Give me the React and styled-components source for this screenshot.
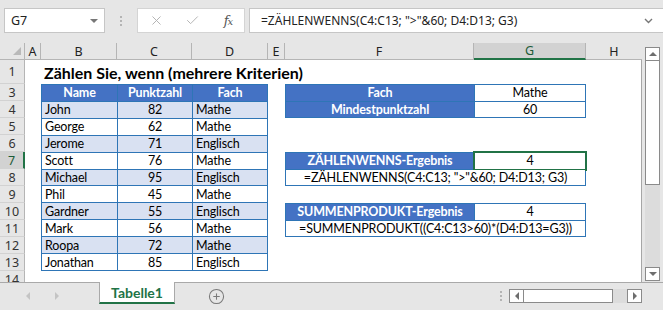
import React from 'react';
import styled, { createGlobalStyle, css } from 'styled-components';
import { X, Check, CirclePlus } from 'lucide-react';

const ui = `"Noto Sans", "Open Sans", "DejaVu Sans", sans-serif`;
const cellFont = `Lato, "Liberation Sans", sans-serif`;
const green = '#217346';
const blue = '#4472c4';
const line = '#2e75b6';
const band = '#d9e1f2';

const Global = createGlobalStyle`
  html, body { margin: 0; padding: 0; background: #e6e6e6; }
  body { width: 663px; height: 310px; overflow: hidden; }
  * { box-sizing: border-box; }
`;

const Window = styled.div`
  width: 663px;
  height: 310px;
  display: flex;
  flex-direction: column;
  background: #e6e6e6;
  overflow: hidden;
`;

/* ---------- formula bar ---------- */
const FormulaRow = styled.div`
  height: 43px;
  flex-shrink: 0;
  display: flex;
  align-items: flex-start;
  padding: 8px 0 0 4px;
`;

const NameBox = styled.div`
  width: 101px;
  height: 25px;
  background: #fff;
  border: 1px solid #c6c6c6;
  display: flex;
  align-items: center;
  justify-content: space-between;
  padding: 0 6px 0 6px;
  font: 12.5px ${ui};
  color: #222;
`;

const DownTri = styled.span`
  width: 0;
  height: 0;
  border-left: 4px solid transparent;
  border-right: 4px solid transparent;
  border-top: 4px solid ${p => p.$color || '#777'};
`;

const Grip = styled.div`
  width: 32px;
  height: 25px;
  display: flex;
  flex-direction: column;
  align-items: center;
  justify-content: center;
  gap: 2px;
`;

const GripDot = styled.span`
  width: 2px;
  height: 2px;
  background: #b4b4b4;
`;

const FxBox = styled.div`
  width: 108px;
  height: 25px;
  background: #fff;
  border: 1px solid #d4d4d4;
  display: grid;
  grid-template-columns: repeat(3, 36px);
  align-items: center;
  justify-items: center;
`;

const Fx = styled.span`
  font: italic 13px "DejaVu Serif", "Liberation Serif", serif;
  color: #555;
  letter-spacing: -1px;
  & > span { font-size: 10px; }
`;

const FormulaInput = styled.div`
  flex: 1;
  margin-left: 4px;
  height: 25px;
  background: #fff;
  border: 1px solid #c6c6c6;
  border-right: none;
  display: flex;
  align-items: center;
  justify-content: space-between;
  padding: 0 10px 0 11px;
  font: 12px ${ui};
  color: #222;
  white-space: nowrap;
`;

const Chevron = styled.svg`
  width: 9px;
  height: 6px;
`;

/* ---------- sheet ---------- */
const Main = styled.div`
  display: flex;
  height: 239px;
  flex-shrink: 0;
`;

const Sheet = styled.div`
  width: 642px;
  height: 239px;
  overflow: hidden;
  display: grid;
  grid-template-columns: 25px 16px 76px 75px 76px 17px 189px 112px 56px;
  grid-template-rows: 17px 24px repeat(12, 17px);
`;

const CellArea = styled.div`
  grid-column: 2 / -1;
  grid-row: 2 / -1;
  background: #fff;
  border-right: 1px solid #a6a6a6;
`;

const Corner = styled.div`
  grid-column: 1;
  grid-row: 1;
  border-right: 1px solid #b5b5b5;
  border-bottom: 1px solid #b5b5b5;
  display: flex;
  align-items: flex-end;
  justify-content: flex-end;
  padding: 0 3px 4px 0;
  &::after {
    content: '';
    width: 0;
    height: 0;
    border-left: 8px solid transparent;
    border-bottom: 8px solid #b9b9b9;
  }
`;

const ColHead = styled.div`
  grid-row: 1;
  grid-column: ${p => p.$col};
  display: flex;
  align-items: center;
  justify-content: center;
  font: 12.5px ${ui};
  color: #222;
  border-right: 1px solid #b5b5b5;
  border-bottom: 1px solid #b5b5b5;
  ${p => p.$active && css`
    background: #d2d2d2;
    border-bottom: 2px solid ${green};
    color: #1d5b38;
  `}
  ${p => p.$last && css`border-right: none;`}
`;

const RowHead = styled.div`
  grid-column: 1;
  grid-row: ${p => p.$row};
  display: flex;
  align-items: center;
  justify-content: center;
  font: 12.5px ${ui};
  color: #333;
  border-right: 1px solid #b5b5b5;
  border-bottom: 1px solid #d2d2d2;
  ${p => p.$active && css`
    background: #d2d2d2;
    border-right: 2px solid ${green};
    color: #1d5b38;
  `}
`;

const Title = styled.div`
  grid-column: 3 / 10;
  grid-row: 2;
  display: flex;
  align-items: flex-end;
  padding: 0 0 2px 3px;
  font: bold 16px ${cellFont};
  color: #000;
  white-space: nowrap;
`;

const Table = styled.div`
  grid-column: ${p => p.$col};
  grid-row: ${p => p.$row};
  display: grid;
  grid-template-columns: ${p => p.$cols};
  grid-auto-rows: 1fr;
  gap: 1px;
  padding: 1px;
  background: ${line};
`;

const Cell = styled.div`
  display: flex;
  align-items: center;
  justify-content: ${p => (p.$align === 'center' ? 'center' : 'flex-start')};
  padding: 0 3px;
  font: ${p => (p.$head ? 'bold ' : '')}12.5px ${cellFont};
  letter-spacing: -0.15px;
  color: ${p => (p.$head ? '#fff' : '#000')};
  background: ${p => (p.$head ? blue : p.$band ? band : '#fff')};
  white-space: nowrap;
  overflow: hidden;
  grid-column: ${p => p.$span || 'auto'};
  ${p => p.$selected && css`
    outline: 2px solid ${green};
    outline-offset: 0px;
  `}
`;

/* ---------- scrollbars ---------- */
const VScroll = styled.div`
  width: 15px;
  margin: 4px 0 1px 3px;
  display: flex;
  flex-direction: column;
  background: #dcdcdc;
`;

const SBtn = styled.div`
  width: 15px;
  height: 14px;
  flex-shrink: 0;
  background: #fff;
  border: 1px solid #8a8a8a;
  display: flex;
  align-items: center;
  justify-content: center;
`;

const Tri = styled.span`
  width: 0;
  height: 0;
  ${p => p.$dir === 'up' && css`
    border-left: 4px solid transparent;
    border-right: 4px solid transparent;
    border-bottom: 4px solid #6e6e6e;
  `}
  ${p => p.$dir === 'down' && css`
    border-left: 4px solid transparent;
    border-right: 4px solid transparent;
    border-top: 4px solid #6e6e6e;
  `}
  ${p => p.$dir === 'left' && css`
    border-top: 4px solid transparent;
    border-bottom: 4px solid transparent;
    border-right: 4px solid ${p.$color || '#6e6e6e'};
  `}
  ${p => p.$dir === 'right' && css`
    border-top: 4px solid transparent;
    border-bottom: 4px solid transparent;
    border-left: 4px solid ${p.$color || '#6e6e6e'};
  `}
`;

const VThumb = styled.div`
  height: 124px;
  flex-shrink: 0;
  background: #fff;
  border: 1px solid #8a8a8a;
  border-top: none;
`;

const Spacer = styled.div`
  flex: 1;
`;

/* ---------- tab bar ---------- */
const TabBar = styled.div`
  flex: 1;
  display: flex;
  align-items: flex-start;
  border-top: 1px solid #a9a9a9;
`;

const Nav = styled.div`
  width: 99px;
  height: 26px;
  display: flex;
  align-items: center;
  gap: 25px;
  padding-left: 26px;
`;

const Tab = styled.div`
  width: 76px;
  height: 22px;
  margin-top: -1px;
  background: #fff;
  border-left: 1px solid #a9a9a9;
  border-right: 1px solid #a9a9a9;
  border-bottom: 2px solid ${green};
  display: flex;
  align-items: center;
  justify-content: center;
  font: bold 14px ${cellFont};
  color: ${green};
`;

const AddSheet = styled.div`
  margin-left: 33px;
  height: 26px;
  display: flex;
  align-items: center;
`;

const HGrip = styled.div`
  height: 26px;
  width: 16px;
  display: flex;
  flex-direction: column;
  align-items: center;
  justify-content: center;
  gap: 2px;
`;

const HScroll = styled.div`
  width: 133px;
  height: 14px;
  margin: 6px 21px 0 0;
  display: flex;
  background: #dcdcdc;
`;

const HBtn = styled(SBtn)`
  width: 15px;
  height: 14px;
`;

const HThumb = styled.div`
  width: 89px;
  background: #fff;
  border: 1px solid #8a8a8a;
  border-left: none;
`;

const names = [
  ['John', '82', 'Mathe'],
  ['George', '62', 'Mathe'],
  ['Jerome', '71', 'Englisch'],
  ['Scott', '76', 'Mathe'],
  ['Michael', '95', 'Englisch'],
  ['Phil', '45', 'Mathe'],
  ['Gardner', '55', 'Englisch'],
  ['Mark', '56', 'Mathe'],
  ['Roopa', '72', 'Mathe'],
  ['Jonathan', '85', 'Englisch'],
];

const cols = ['A', 'B', 'C', 'D', 'E', 'F', 'G', 'H'];
const rows = [
  [1, 2], [3, 3], [4, 4], [5, 5], [6, 6], [7, 7], [8, 8], [9, 9],
  [10, 10], [11, 11], [12, 12], [13, 13], [14, 14],
];

export default function App() {
  return (
    <Window>
      <Global />
      <FormulaRow>
        <NameBox>
          <span>G7</span>
          <DownTri />
        </NameBox>
        <Grip>
          <GripDot /><GripDot /><GripDot />
        </Grip>
        <FxBox>
          <X size={15} color="#b0b0b0" strokeWidth={1.5} />
          <Check size={15} color="#b0b0b0" strokeWidth={1.5} />
          <Fx>f<span>x</span></Fx>
        </FxBox>
        <FormulaInput>
          <span>=ZÄHLENWENNS(C4:C13; "&gt;"&amp;60; D4:D13; G3)</span>
          <Chevron viewBox="0 0 9 6">
            <path d="M1 1 L4.5 4.5 L8 1" fill="none" stroke="#777" strokeWidth="1.4" />
          </Chevron>
        </FormulaInput>
      </FormulaRow>

      <Main>
        <Sheet>
          <CellArea />
          <Corner />
          {cols.map((c, i) => (
            <ColHead key={c} $col={i + 2} $active={c === 'G'} $last={c === 'H'}>{c}</ColHead>
          ))}
          {rows.map(([label, r]) => (
            <RowHead key={label} $row={r} $active={label === 7}>{label}</RowHead>
          ))}
          <Title>Zählen Sie, wenn (mehrere Kriterien)</Title>

          <Table $col="3 / 6" $row="3 / 14" $cols="75px 74px 1fr">
            <Cell $head $align="center">Name</Cell>
            <Cell $head $align="center">Punktzahl</Cell>
            <Cell $head $align="center">Fach</Cell>
            {names.map(([n, p, f], i) => (
              <React.Fragment key={n}>
                <Cell $band={i % 2 === 0}>{n}</Cell>
                <Cell $band={i % 2 === 0} $align="center">{p}</Cell>
                <Cell $band={i % 2 === 0}>{f}</Cell>
              </React.Fragment>
            ))}
          </Table>

          <Table $col="7 / 9" $row="3 / 5" $cols="188px 1fr">
            <Cell $head $align="center">Fach</Cell>
            <Cell $align="center">Mathe</Cell>
            <Cell $head $align="center">Mindestpunktzahl</Cell>
            <Cell $align="center">60</Cell>
          </Table>

          <Table $col="7 / 9" $row="7 / 9" $cols="188px 1fr">
            <Cell $head $align="center">ZÄHLENWENNS-Ergebnis</Cell>
            <Cell $align="center" $selected>4</Cell>
            <Cell $align="center" $span="1 / -1">=ZÄHLENWENNS(C4:C13; "&gt;"&amp;60; D4:D13; G3)</Cell>
          </Table>

          <Table $col="7 / 9" $row="10 / 12" $cols="188px 1fr">
            <Cell $head $align="center">SUMMENPRODUKT-Ergebnis</Cell>
            <Cell $align="center">4</Cell>
            <Cell $align="center" $span="1 / -1">=SUMMENPRODUKT((C4:C13&gt;60)*(D4:D13=G3))</Cell>
          </Table>
        </Sheet>
        <VScroll>
          <SBtn><Tri $dir="up" /></SBtn>
          <VThumb />
          <Spacer />
          <SBtn><Tri $dir="down" /></SBtn>
        </VScroll>
      </Main>

      <TabBar>
        <Nav>
          <Tri $dir="left" $color="#c4c4c4" />
          <Tri $dir="right" $color="#c4c4c4" />
        </Nav>
        <Tab>Tabelle1</Tab>
        <AddSheet>
          <CirclePlus size={17} color="#7a7a7a" strokeWidth={1.5} />
        </AddSheet>
        <Spacer />
        <HGrip>
          <GripDot /><GripDot /><GripDot />
        </HGrip>
        <HScroll>
          <HBtn><Tri $dir="left" /></HBtn>
          <HThumb />
          <Spacer />
          <HBtn><Tri $dir="right" /></HBtn>
        </HScroll>
      </TabBar>
    </Window>
  );
}
